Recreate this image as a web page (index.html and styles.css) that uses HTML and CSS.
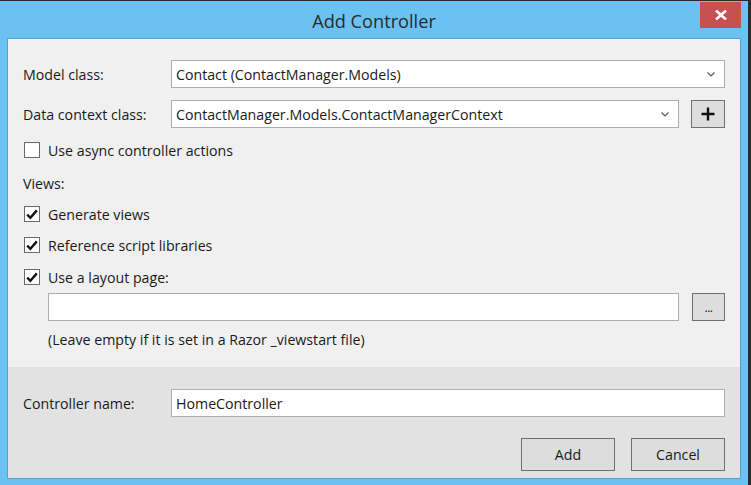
FILE: index.html
```html
<!DOCTYPE html>
<html>
<head>
<meta charset="utf-8">
<link rel="stylesheet" href="styles.css">
</head>
<body>
<div class="window">
  <div class="titlebar">
    <span class="title">Add Controller</span>
    <div class="close"><svg width="12" height="10" viewBox="0 0 12 10"><path d="M1 0.5 L11 9.5 M11 0.5 L1 9.5" stroke="#fff" stroke-width="2.6"/></svg></div>
  </div>
  <div class="panel">
    <div class="main">
      <div class="row r-model">
        <span class="lbl">Model class:</span>
        <div class="field select"><span class="val">Contact (ContactManager.Models)</span><svg class="chev" width="8" height="5" viewBox="0 0 8 5"><path d="M0.5 0.5 L4 4 L7.5 0.5" fill="none" stroke="#5a5a5a" stroke-width="1.2"/></svg></div>
      </div>
      <div class="row r-ctx">
        <span class="lbl">Data context class:</span>
        <div class="field select"><span class="val">ContactManager.Models.ContactManagerContext</span><svg class="chev" width="8" height="5" viewBox="0 0 8 5"><path d="M0.5 0.5 L4 4 L7.5 0.5" fill="none" stroke="#5a5a5a" stroke-width="1.2"/></svg></div>
        <div class="sqbtn"><svg width="14" height="14" viewBox="0 0 14 14"><path d="M7 0.5 V13.5 M0.5 7 H13.5" stroke="#111" stroke-width="2.4"/></svg></div>
      </div>
      <div class="check r-async"><span class="box"></span><span>Use async controller actions</span></div>
      <div class="text r-views">Views:</div>
      <div class="check r-gen"><span class="box"><svg width="12" height="11" viewBox="0 0 12 11"><path d="M1.2 5.6 L4.4 8.8 L10.8 1.4" fill="none" stroke="#111" stroke-width="2.4"/></svg></span><span>Generate views</span></div>
      <div class="check r-ref"><span class="box"><svg width="12" height="11" viewBox="0 0 12 11"><path d="M1.2 5.6 L4.4 8.8 L10.8 1.4" fill="none" stroke="#111" stroke-width="2.4"/></svg></span><span>Reference script libraries</span></div>
      <div class="check r-lay"><span class="box"><svg width="12" height="11" viewBox="0 0 12 11"><path d="M1.2 5.6 L4.4 8.8 L10.8 1.4" fill="none" stroke="#111" stroke-width="2.4"/></svg></span><span>Use a layout page:</span></div>
      <div class="row r-layin">
        <div class="field"></div>
        <div class="sqbtn dots">...</div>
      </div>
      <div class="text r-hint">(Leave empty if it is set in a Razor _viewstart file)</div>
    </div>
    <div class="footer">
      <div class="row">
        <span class="lbl">Controller name:</span>
        <div class="field"><span class="val">HomeController</span></div>
      </div>
      <div class="actions">
        <div class="btn">Add</div>
        <div class="btn">Cancel</div>
      </div>
    </div>
  </div>
</div>
</body>
</html>
```
FILE: styles.css
```css
html, body {
  margin: 0;
  padding: 0;
}
body {
  background: #2b2b2b;
  padding-top: 1px;
  width: 751px;
  height: 484px;
  overflow: hidden;
  font-family: "Segoe UI", "Open Sans", "Noto Sans", sans-serif;
  font-size: 14.2px;
  color: #1a1a1a;
}
.window {
  width: 748px;
  height: 484px;
  background: #6bc1f1;
  display: flex;
  flex-direction: column;
  box-sizing: border-box;
  padding: 0 7px 6px 7px;
}
.titlebar {
  height: 37px;
  position: relative;
  display: flex;
  align-items: center;
  justify-content: center;
}
.title {
  font-size: 18.2px;
  color: #2a2a2a;
  margin-top: 2px;
}
.close {
  position: absolute;
  right: 0;
  top: 1px;
  width: 41px;
  height: 26px;
  background: #c75050;
  display: flex;
  align-items: center;
  justify-content: center;
}
.panel {
  flex: 1;
  border: 1px solid #4fa3d9;
  display: flex;
  flex-direction: column;
}
.main {
  height: 328px;
  box-sizing: border-box;
  background: #f0f0f0;
  padding: 21px 15px 0 15px;
  display: flex;
  flex-direction: column;
}
.footer {
  flex: 1;
  background: #e2e2e2;
  padding: 22px 15px 7px 15px;
  display: flex;
  flex-direction: column;
}
.row {
  display: flex;
  align-items: center;
  height: 28px;
}
.lbl {
  width: 148px;
  flex: none;
}
.field {
  flex: 1;
  height: 28px;
  box-sizing: border-box;
  border: 1px solid #abadb3;
  background: #fff;
  display: flex;
  align-items: center;
  padding: 0 9px 0 4px;
}
.field .val {
  flex: 1;
  white-space: nowrap;
}
.chev {
  flex: none;
}
.sqbtn {
  flex: none;
  width: 34px;
  height: 28px;
  box-sizing: border-box;
  border: 1px solid #707070;
  background: #dddddd;
  margin-left: 12px;
  display: flex;
  align-items: center;
  justify-content: center;
}
.dots {
  align-items: flex-end;
  padding-bottom: 6px;
  font-size: 12px;
  line-height: 12px;
  letter-spacing: -0.5px;
}
.r-ctx { margin-top: 12px; }
.check {
  display: flex;
  align-items: center;
  height: 20px;
  gap: 8px;
  padding-left: 1px;
}
.box {
  width: 16px;
  height: 16px;
  box-sizing: border-box;
  border: 1px solid #6a6a6a;
  background: #fff;
  display: flex;
  align-items: center;
  justify-content: center;
  flex: none;
}
.text {
  height: 20px;
  display: flex;
  align-items: center;
}
.r-async { margin-top: 12px; }
.r-views { margin-top: 13px; }
.r-gen { margin-top: 11px; }
.r-ref { margin-top: 11px; }
.r-lay { margin-top: 12px; }
.r-layin { margin-top: 6px; padding-left: 25px; }
.r-layin .sqbtn { margin-left: 13px; width: 33px; }
.r-hint { margin-top: 8px; padding-left: 25px; }
.actions {
  margin-top: 21px;
  display: flex;
  justify-content: flex-end;
  gap: 16px;
}
.btn {
  width: 94px;
  height: 33px;
  box-sizing: border-box;
  border: 1px solid #707070;
  background: #dddddd;
  display: flex;
  align-items: center;
  justify-content: center;
}
```
